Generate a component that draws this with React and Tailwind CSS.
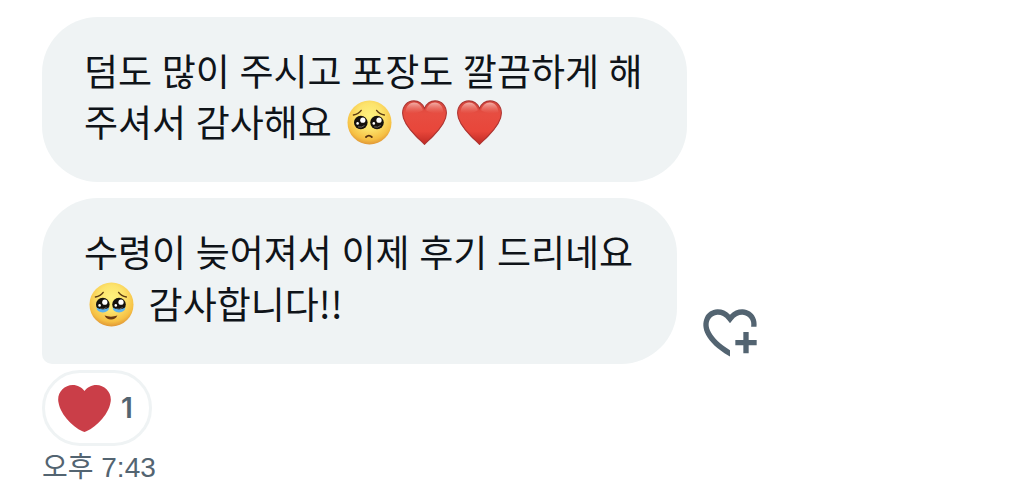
import React from "react";

function FaceEmoji({ id, label, children }) {
  return (
    <svg viewBox="0 0 45 45" role="img" aria-label={label} className="mx-[5px] inline-block size-[45px] align-[-8px]">
      <defs>
        <radialGradient id={id} cx="50%" cy="36%" r="66%">
          <stop offset="0" stopColor="#fff27e" />
          <stop offset="0.45" stopColor="#fce36c" />
          <stop offset="0.8" stopColor="#f6c044" />
          <stop offset="1" stopColor="#dc8f33" />
        </radialGradient>
      </defs>
      <circle cx="22.5" cy="22.5" r="22" fill={`url(#${id})`} />
      {children}
    </svg>
  );
}

function Eyes() {
  return (
    <>
      <circle cx="13.8" cy="22.5" r="6.8" fill="#15110d" />
      <circle cx="30" cy="22.5" r="6.8" fill="#15110d" />
      <circle cx="15.8" cy="20.2" r="2.6" fill="#fff" />
      <circle cx="32" cy="20.2" r="2.6" fill="#fff" />
      <circle cx="10.6" cy="23.4" r="1.3" fill="#fff" />
      <circle cx="26.8" cy="23.4" r="1.3" fill="#fff" />
      <path d="M11.4 27q3.2 1 5.8-1.2M27.6 27q3.2 1 5.8-1.2" fill="none" stroke="#77736d" strokeWidth="0.9" strokeLinecap="round" />
    </>
  );
}

function Brows() {
  return (
    <path d="M6.4 15q5.2-.8 7.8-4.6M37.4 15q-5.2-.8-7.8-4.6" fill="none" stroke="#5d3c12" strokeWidth="1.4" strokeLinecap="round" />
  );
}

function Pleading() {
  return (
    <FaceEmoji id="face-pleading" label="🥺">
      <Brows />
      <Eyes />
      <path d="M19 37q2.9-2.8 5.8 0" fill="none" stroke="#54300f" strokeWidth="1.8" strokeLinecap="round" />
    </FaceEmoji>
  );
}

function HoldingTears() {
  return (
    <FaceEmoji id="face-tears" label="🥹">
      <Brows />
      <Eyes />
      <path d="M7.4 25.6q2.4 1.8 6.4 1.8t6.4-1.8q-.6 4.8-6.4 4.8t-6.4-4.8zM23.6 25.6q2.4 1.8 6.4 1.8t6.4-1.8q-.6 4.8-6.4 4.8t-6.4-4.8z" fill="#5eb4ee" />
      <path d="M15.6 33.6q6.3 2.2 12.8 0-1.8 4-6.4 4t-6.4-4z" fill="#6b3a12" />
    </FaceEmoji>
  );
}

function HeartEmoji({ id }) {
  return (
    <svg viewBox="0 0 46 46" role="img" aria-label="❤️" className="mx-[5px] inline-block size-[45px] align-[-8px]">
      <defs>
        <linearGradient id={id} x1="0" y1="0" x2="0" y2="1">
          <stop offset="0" stopColor="#d4453c" />
          <stop offset="0.3" stopColor="#e74d41" />
          <stop offset="0.7" stopColor="#e8463a" />
          <stop offset="1" stopColor="#c02a24" />
        </linearGradient>
        <linearGradient id={`${id}-shine`} x1="0" y1="0" x2="0" y2="1">
          <stop offset="0" stopColor="#ffd9d2" stopOpacity="0.7" />
          <stop offset="1" stopColor="#ff9a8c" stopOpacity="0" />
        </linearGradient>
      </defs>
      <path
        d="M23 8.6C20.8 3.6 16.9.9 12.2.9 5.4.9.6 6.3.6 13.4.6 22 8 30.6 14.2 36.8c3.6 3.6 6.5 6.2 8.8 8.6 2.3-2.4 5.2-5 8.8-8.6C38 30.6 45.4 22 45.4 13.4 45.4 6.3 40.6.9 33.8.9 29.1.9 25.2 3.6 23 8.6z"
        fill={`url(#${id})`}
        stroke="#ad3532"
        strokeWidth="1.1"
      />
      <path d="M3.6 12.6C4 6.6 7.6 2.6 12.4 2.6c4.4 0 7.4 3 9 8-4.6 3.4-12.6 4-17.8 2z" fill={`url(#${id}-shine)`} />
      <path d="M42.4 12.6C42 6.6 38.4 2.6 33.6 2.6c-4.4 0-7.4 3-9 8 4.6 3.4 12.6 4 17.8 2z" fill={`url(#${id}-shine)`} />
    </svg>
  );
}

function Bubble({ last, children }) {
  return (
    <p
      className={`w-fit bg-[#eff3f4] pt-[29px] pr-11 pb-[34px] pl-[42px] text-[37px] leading-[51px] text-[#0f1419] ${
        last ? "rounded-[56px] rounded-bl-[10px]" : "rounded-[56px]"
      }`}
    >
      {children}
    </p>
  );
}

export default function App() {
  return (
    <main className="flex flex-col items-start bg-white pt-[17px] pl-[42px] font-['Open_Sans','Noto_Sans_CJK_KR',sans-serif]">
      <Bubble>
        덤도 많이 주시고 포장도 깔끔하게 해<br />
        주셔서 감사해요 <Pleading />
        <HeartEmoji id="heart-a" />
        <HeartEmoji id="heart-b" />
      </Bubble>

      <div className="mt-4 flex items-end gap-[21px]">
        <Bubble last>
          수령이 늦어져서 이제 후기 드리네요<br />
          <HoldingTears /> 감사합니다<span className="font-['Noto_Sans_CJK_KR',sans-serif]">!!</span>
        </Bubble>
        <button type="button" aria-label="반응 추가" className="text-[#536471]">
          <svg viewBox="0 0 24 24" fill="currentColor" aria-hidden="true" className="size-16">
            <path d="M17 12v3h-2.998v2h3v3h2v-3h3v-2h-3.001v-3H17zm-5 6.839c-3.871-2.34-6.053-4.639-7.127-6.609-1.112-2.04-1.031-3.7-.479-4.82.561-1.13 1.667-1.84 2.91-1.91 1.222-.06 2.68.51 3.892 2.16l.806 1.09.805-1.09c1.211-1.65 2.668-2.22 3.89-2.16 1.242.07 2.347.78 2.908 1.91.334.677.49 1.554.321 2.59h2.011c.153-1.283-.039-2.469-.539-3.48-.887-1.79-2.647-2.91-4.601-3.01-1.65-.09-3.367.56-4.796 2.01-1.43-1.45-3.147-2.1-4.798-2.01-1.954.1-3.714 1.22-4.601 3.01-.896 1.81-.846 4.17.514 6.67 1.353 2.48 4.003 5.12 8.382 7.67l.502.299v-2.32z" />
          </svg>
        </button>
      </div>

      <button
        type="button"
        className="mt-[6px] flex h-[76px] items-center gap-[10px] rounded-full border-[3px] border-[#eff3f4] bg-white pr-4 pl-[13px] text-[#536471]"
      >
        <svg viewBox="0 0 36 36" role="img" aria-label="❤️" className="size-[53px]">
          <path
            fill="#ca3e48"
            d="M35.885 11.833c0-5.45-4.418-9.868-9.867-9.868-3.308 0-6.227 1.633-8.018 4.129-1.791-2.496-4.71-4.129-8.017-4.129-5.45 0-9.868 4.417-9.868 9.868 0 .772.098 1.52.266 2.241C1.751 22.587 11.216 31.568 18 34.034c6.783-2.466 16.249-11.447 17.617-19.959.17-.721.268-1.469.268-2.242z"
          />
        </svg>
        <span className="font-[Inter,sans-serif] text-[28px] leading-9 font-semibold">1</span>
      </button>
      <time dateTime="19:43" className="mt-1 font-['Liberation_Sans','Noto_Sans_CJK_KR',sans-serif] text-[28px] leading-9 text-[#536471]">
        오후 7:43
      </time>
    </main>
  );
}
